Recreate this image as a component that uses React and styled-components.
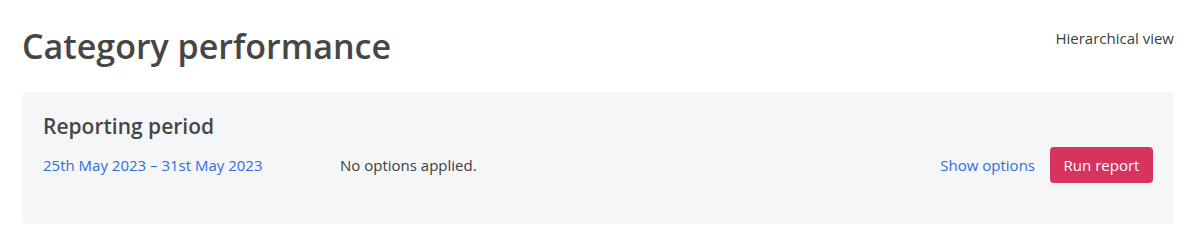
import React from 'react';
import styled, { createGlobalStyle } from 'styled-components';

const GlobalStyle = createGlobalStyle`
  body {
    margin: 0;
    background: #ffffff;
    font-family: "Open Sans", "Liberation Sans", sans-serif;
    color: #3d3d3d;
  }
`;

const Page = styled.div`
  padding: 22px 26px 0 22px;
`;

const Header = styled.div`
  display: flex;
  justify-content: space-between;
  align-items: flex-start;
  height: 70px;
`;

const Title = styled.h1`
  margin: 0;
  font-size: 34px;
  font-weight: 600;
  line-height: 48px;
  color: #464646;
`;

const ViewLink = styled.a`
  margin-top: 6px;
  font-size: 15px;
  color: #3d3d3d;
  text-decoration: none;
  cursor: pointer;
`;

const Panel = styled.section`
  background: #f5f6f8;
  border-radius: 4px;
  padding: 20px 21px 41px 21px;
`;

const PanelTitle = styled.h2`
  margin: 0 0 7px;
  font-size: 21px;
  font-weight: 600;
  line-height: 28px;
  color: #464646;
`;

const Row = styled.div`
  display: flex;
  align-items: center;
`;

const DateLink = styled.a`
  width: 297px;
  font-size: 15px;
  color: #2e6fd8;
  text-decoration: none;
  cursor: pointer;
`;

const Note = styled.span`
  flex: 1;
  font-size: 15px;
  color: #3d3d3d;
`;

const OptionsLink = styled.a`
  font-size: 15px;
  color: #2e6fd8;
  text-decoration: none;
  cursor: pointer;
  margin-right: 15px;
`;

const RunButton = styled.button`
  height: 36px;
  width: 103px;
  border: none;
  border-radius: 4px;
  background: #d6335f;
  color: #ffffff;
  font-family: inherit;
  font-size: 15px;
  cursor: pointer;
`;

export default function App() {
  return (
    <>
      <GlobalStyle />
      <Page>
        <Header>
          <Title>Category performance</Title>
          <ViewLink>Hierarchical view</ViewLink>
        </Header>
        <Panel>
          <PanelTitle>Reporting period</PanelTitle>
          <Row>
            <DateLink>25th May 2023 – 31st May 2023</DateLink>
            <Note>No options applied.</Note>
            <OptionsLink>Show options</OptionsLink>
            <RunButton>Run report</RunButton>
          </Row>
        </Panel>
      </Page>
    </>
  );
}
